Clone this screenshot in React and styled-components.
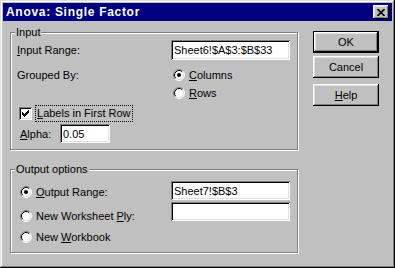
import styled, { createGlobalStyle } from 'styled-components';

const Global = createGlobalStyle`
  html, body {
    margin: 0;
    padding: 0;
    background: #c0c0c0;
  }
  * {
    box-sizing: border-box;
  }
`;

const Window = styled.div`
  width: 395px;
  height: 268px;
  padding: 3px;
  background: #c0c0c0;
  box-shadow: inset -1px -1px #000, inset 1px 1px #dfdfdf,
    inset -2px -2px #808080, inset 2px 2px #fff;
  font-family: "Liberation Sans", Arial, sans-serif;
  font-size: 11px;
  color: #000;
`;

const TitleBar = styled.div`
  height: 18px;
  background: #000080;
  display: flex;
  align-items: center;
  justify-content: space-between;
  padding: 0 3px 0 3px;
`;

const Title = styled.span`
  color: #fff;
  font-weight: bold;
  font-size: 12px;
  letter-spacing: 0.7px;
`;

const CloseButton = styled.div`
  width: 16px;
  height: 14px;
  background: #c0c0c0;
  box-shadow: inset -1px -1px #000, inset 1px 1px #fff,
    inset -2px -2px #808080, inset 2px 2px #dfdfdf;
  display: flex;
  align-items: center;
  justify-content: center;
`;

const Body = styled.div`
  display: flex;
  padding-left: 7px;
`;

const LeftColumn = styled.div`
  width: 288px;
  display: flex;
  flex-direction: column;
`;

const Group = styled.div`
  position: relative;
  height: ${p => p.h}px;
  margin-top: ${p => p.top}px;
  border: 1px solid #808080;
  box-shadow: inset 1px 1px #fff, 1px 1px #fff;
`;

const Legend = styled.span`
  position: absolute;
  top: -8px;
  left: 4px;
  padding: 0 1px;
  background: #c0c0c0;
  line-height: 14px;
`;

const Row = styled.div`
  display: flex;
  align-items: ${p => p.align || 'center'};
  height: ${p => p.h}px;
  margin-top: ${p => p.top || 0}px;
  margin-left: ${p => p.left || 0}px;
`;

const Label = styled.span`
  width: ${p => p.w ? `${p.w}px` : 'auto'};
  flex-shrink: 0;
  white-space: nowrap;
`;

const U = styled.span`
  text-decoration: underline;
  text-underline-offset: 1px;
`;

const TextBox = styled.input`
  width: ${p => p.w}px;
  height: ${p => p.h || 20}px;
  border: none;
  outline: none;
  margin: 0;
  padding: 0 3px;
  background: #fff;
  font-family: "Liberation Sans", Arial, sans-serif;
  font-size: 11px;
  color: #000;
  box-shadow: inset 1px 1px #808080, inset -1px -1px #fff,
    inset 2px 2px #000, inset -2px -2px #dfdfdf;
`;

const RadioStack = styled.div`
  display: flex;
  flex-direction: column;
`;

const RadioItem = styled.div`
  display: flex;
  align-items: center;
  gap: 4px;
  height: 18px;
  margin-top: ${p => p.top || 0}px;
  white-space: nowrap;
`;

const Check = styled.span`
  width: 13px;
  height: 13px;
  flex-shrink: 0;
  background: #fff;
  box-shadow: inset 1px 1px #808080, inset -1px -1px #fff,
    inset 2px 2px #000, inset -2px -2px #dfdfdf;
  display: flex;
  align-items: center;
  justify-content: center;
`;

const Focus = styled.span`
  margin-left: 3px;
  padding: 1px;
  border: 1px dotted #000;
  line-height: 13px;
`;

const OutputBody = styled.div`
  display: flex;
`;

const RadioColumn = styled.div`
  width: 160px;
  padding: 13px 0 0 9px;
  display: flex;
  flex-direction: column;
`;

const InputColumn = styled.div`
  padding-top: 11px;
  display: flex;
  flex-direction: column;
  gap: 2px;
`;

const ButtonColumn = styled.div`
  margin-left: 15px;
  padding-top: 10px;
  display: flex;
  flex-direction: column;
`;

const Button = styled.div`
  width: 66px;
  height: 22px;
  margin-top: ${p => p.top || 0}px;
  display: flex;
  align-items: center;
  justify-content: center;
  background: #c0c0c0;
  border: ${p => p.primary ? '1px solid #000' : 'none'};
  box-shadow: inset -1px -1px #000, inset 1px 1px #fff,
    inset -2px -2px #808080, inset 2px 2px #dfdfdf;
`;

function Radio({ checked }) {
  return (
    <svg width="12" height="12" viewBox="0 0 12 12" style={{ flexShrink: 0 }}>
      <circle cx="6" cy="6" r="5" fill="#fff" />
      <path d="M2.11 9.89 A5.5 5.5 0 0 1 9.89 2.11" fill="none" stroke="#808080" />
      <path d="M9.89 2.11 A5.5 5.5 0 0 1 2.11 9.89" fill="none" stroke="#fff" />
      <path d="M2.82 9.18 A4.5 4.5 0 0 1 9.18 2.82" fill="none" stroke="#000" />
      <path d="M9.18 2.82 A4.5 4.5 0 0 1 2.82 9.18" fill="none" stroke="#dfdfdf" />
      {checked && <circle cx="6" cy="6" r="2" fill="#000" />}
    </svg>
  );
}

function CheckMark() {
  return (
    <svg width="9" height="9" viewBox="0 0 9 9" shapeRendering="crispEdges">
      <path d="M1 3 L3 5 L8 0 L8 3 L3 8 L1 6 Z" fill="#000" />
    </svg>
  );
}

function CloseGlyph() {
  return (
    <svg width="8" height="7" viewBox="0 0 8 7">
      <path d="M0.5 0 L7.5 7 M7.5 0 L0.5 7" stroke="#000" strokeWidth="1.6" />
    </svg>
  );
}

export default function App() {
  return (
    <Window>
      <Global />
      <TitleBar>
        <Title>Anova: Single Factor</Title>
        <CloseButton><CloseGlyph /></CloseButton>
      </TitleBar>
      <Body>
        <LeftColumn>
          <Group h={118} top={11}>
            <Legend>Input</Legend>
            <Row h={20} top={7} left={6}>
              <Label w={154}><U>I</U>nput Range:</Label>
              <TextBox w={119} readOnly defaultValue="Sheet6!$A$3:$B$33" />
            </Row>
            <Row h={36} top={6} left={6} align="flex-start">
              <Label w={156} style={{ lineHeight: '18px' }}>Grouped By:</Label>
              <RadioStack>
                <RadioItem><Radio checked /><span><U>C</U>olumns</span></RadioItem>
                <RadioItem><Radio /><span><U>R</U>ows</span></RadioItem>
              </RadioStack>
            </Row>
            <Row h={18} top={2} left={8}>
              <Check><CheckMark /></Check>
              <Focus><U>L</U>abels in First Row</Focus>
            </Row>
            <Row h={19} top={2} left={9}>
              <Label w={40}><U>A</U>lpha:</Label>
              <TextBox w={50} h={19} readOnly defaultValue="0.05" />
            </Row>
          </Group>
          <Group h={84} top={19}>
            <Legend>Output options</Legend>
            <OutputBody>
              <RadioColumn>
                <RadioItem><Radio checked /><span><U>O</U>utput Range:</span></RadioItem>
                <RadioItem top={6}><Radio /><span>New Worksheet <U>P</U>ly:</span></RadioItem>
                <RadioItem top={3}><Radio /><span>New <U>W</U>orkbook</span></RadioItem>
              </RadioColumn>
              <InputColumn>
                <TextBox w={119} h={19} readOnly defaultValue="Sheet7!$B$3" />
                <TextBox w={119} h={19} readOnly defaultValue="" />
              </InputColumn>
            </OutputBody>
          </Group>
        </LeftColumn>
        <ButtonColumn>
          <Button primary>OK</Button>
          <Button top={3}>Cancel</Button>
          <Button top={6}><span><U>H</U>elp</span></Button>
        </ButtonColumn>
      </Body>
    </Window>
  );
}
